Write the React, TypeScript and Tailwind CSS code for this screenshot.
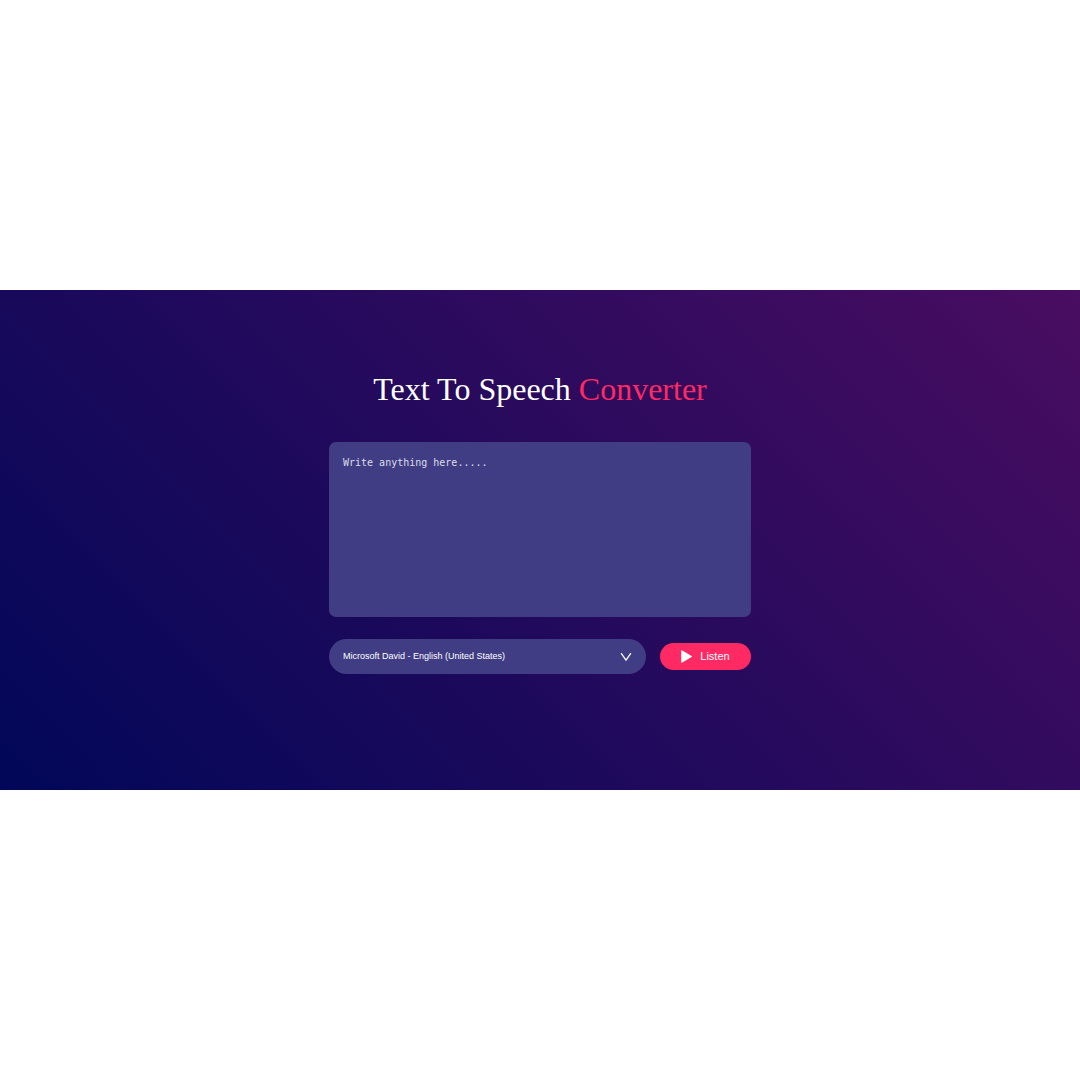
import React from "react";

const voices = ["Microsoft David - English (United States)"];

export default function App() {
  return (
    <div className="flex min-h-screen flex-col justify-center bg-white">
      <main className="flex flex-col items-center bg-[linear-gradient(45deg,#010758,#490d61)] px-4 pt-20 pb-29 text-white">
        <h1 className="mb-[34px] text-center font-['Liberation_Serif',serif] text-[32px] leading-[38px]">
          Text To Speech <span className="text-[#ff2963]">Converter</span>
        </h1>
        <form className="w-full max-w-[422px]" onSubmit={(e) => e.preventDefault()}>
          <textarea
            aria-label="Text to convert"
            placeholder="Write anything here....."
            className="mb-[22px] block h-[175px] w-full resize-none rounded-[7px] bg-[#403d84] p-3.5 font-['DejaVu_Sans_Mono',monospace] text-[10px] leading-[14px] text-white outline-none placeholder:text-[#dddde9]"
          />
          <div className="flex items-center gap-3.5 font-['Liberation_Sans',sans-serif]">
            <div className="relative flex-1">
              <select
                aria-label="Voice"
                className="block h-[35px] w-full appearance-none rounded-full bg-[#403d84] pr-9 pl-3.5 text-[9px] text-white outline-none"
              >
                {voices.map((voice) => (
                  <option key={voice}>{voice}</option>
                ))}
              </select>
              <svg
                aria-hidden="true"
                viewBox="0 0 12 10"
                className="pointer-events-none absolute top-[13px] right-3.5 h-2.5 w-3"
                fill="none"
                stroke="white"
                strokeWidth="1.3"
                strokeLinecap="round"
                strokeLinejoin="round"
              >
                <path d="M1.4 1.6 6 8.2 10.6 1.6" />
              </svg>
            </div>
            <button
              type="submit"
              className="flex h-[27px] w-[91px] items-center justify-center gap-2 rounded-full bg-[#ff2963] text-[11px]"
            >
              <svg aria-hidden="true" viewBox="0 0 11 13" className="h-[13px] w-[11px]" fill="white">
                <path d="M0.9 0.3 10.6 5.9Q11.3 6.5 10.6 7.1L0.9 12.7Q0.2 12.9 0.2 12.2V0.8Q0.2 0.1 0.9 0.3Z" />
              </svg>
              Listen
            </button>
          </div>
        </form>
      </main>
    </div>
  );
}
